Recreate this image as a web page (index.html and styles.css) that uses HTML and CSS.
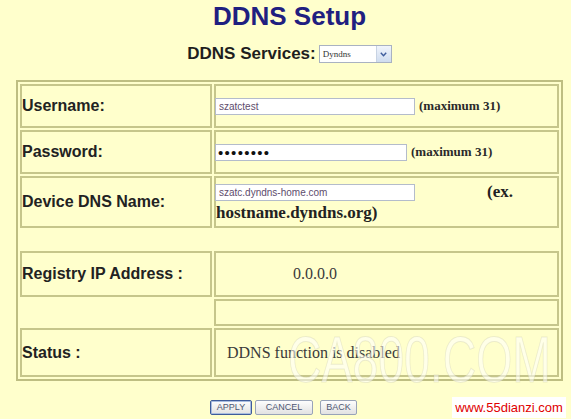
FILE: index.html
```html
<!DOCTYPE html>
<html>
<head>
<meta charset="utf-8">
<title>DDNS Setup</title>
<link rel="stylesheet" href="styles.css">
</head>
<body>
<div class="page">
  <h1 class="title">DDNS Setup</h1>
  <div class="services">
    <span class="services-label">DDNS Services:</span>
    <div class="select">
      <span class="select-text">Dyndns</span>
      <span class="select-arrow"><svg width="7" height="5" viewBox="0 0 7 5"><path d="M0.8 0.8 L3.5 3.8 L6.2 0.8" fill="none" stroke="#3f5d9c" stroke-width="1.4"/></svg></span>
    </div>
  </div>
  <table class="ddns">
    <tr>
      <td class="label h1">Username:</td>
      <td class="value h1"><div class="inline"><input class="field w200" type="text" value="szatctest"><span class="hint">(maximum 31)</span></div></td>
    </tr>
    <tr>
      <td class="label h2">Password:</td>
      <td class="value h2"><div class="inline"><input class="field pwd w192" type="password" value="12345678"><span class="hint">(maximum 31)</span></div></td>
    </tr>
    <tr>
      <td class="label h3">Device DNS Name:</td>
      <td class="value h3">
        <div class="line1"><input class="field w200" type="text" value="szatc.dyndns-home.com"><span class="ex">(ex.</span></div>
        <div class="line2">hostname.dyndns.org)</div>
      </td>
    </tr>
    <tr>
      <td class="blank hgap" colspan="2"></td>
    </tr>
    <tr>
      <td class="label h4">Registry IP Address :</td>
      <td class="value h4"><span class="plain ip">0.0.0.0</span></td>
    </tr>
    <tr>
      <td class="blank h5"></td>
      <td class="value h5"></td>
    </tr>
    <tr>
      <td class="label h6">Status :</td>
      <td class="value h6"><span class="plain status">DDNS function is disabled</span></td>
    </tr>
  </table>
  <div class="buttons">
    <button class="btn btn-default b-apply" type="button">APPLY</button>
    <button class="btn b-cancel" type="button">CANCEL</button>
    <button class="btn b-back" type="button">BACK</button>
  </div>
</div>
<div class="ghost">CA800.COM</div>
<div class="site">www.55dianzi.com</div>
</body>
</html>
```
FILE: styles.css
```css
html, body {
  margin: 0;
  background: #ffffcc;
}
body {
  font-family: "Liberation Sans", Arial, sans-serif;
  width: 571px;
  height: 419px;
  overflow: hidden;
}
.page {
  width: 547px;
  margin-left: 16px;
}
.title {
  margin: 0;
  padding-top: 1px;
  height: 30px;
  line-height: 30px;
  font-size: 26px;
  font-weight: bold;
  color: #1f2080;
  text-align: center;
}
.services {
  display: flex;
  justify-content: center;
  align-items: center;
  height: 20px;
  margin-top: 13px;
}
.services-label {
  font-size: 17px;
  font-weight: bold;
  color: #1e1e1e;
  margin-right: 3px;
}
.select {
  width: 73px;
  height: 18px;
  box-sizing: border-box;
  border: 1px solid #a9b2c2;
  background: #fff;
  display: flex;
  align-items: stretch;
}
.select-text {
  flex: 1;
  font-family: "Liberation Serif", serif;
  font-size: 9px;
  line-height: 16px;
  padding-left: 3px;
  color: #333;
}
.select-arrow {
  width: 14px;
  background: linear-gradient(#f1f5fc, #cfdcef);
  border-left: 1px solid #c8d3e3;
  display: flex;
  align-items: center;
  justify-content: center;
}
.ddns {
  margin-top: 16px;
  width: 547px;
  border: 2px solid #bebe82;
  border-spacing: 2px;
  border-collapse: separate;
}
.ddns td {
  border: 2px solid #c6c68b;
  padding: 0;
  box-sizing: border-box;
  vertical-align: middle;
}
.ddns td.blank {
  border: none;
}
.label {
  width: 192px;
  padding-left: 1px;
  font-size: 16px;
  font-weight: bold;
  color: #222;
}
.h1 { height: 44px; }
.h2 { height: 44px; }
.h3 { height: 52px; }
.hgap { height: 19px; }
.h4 { height: 46px; }
.h5 { height: 27px; }
.h6 { height: 49px; }
.inline {
  display: flex;
  align-items: center;
}
.field {
  box-sizing: border-box;
  height: 17px;
  margin: 0 0 0 -1px;
  border: 1px solid #b4bccb;
  background: #fff;
  padding: 0 3px;
  font-family: "Liberation Sans", Arial, sans-serif;
  font-size: 10px;
  color: #5e4c6c;
  outline: none;
}
.w200 { width: 200px; }
.w192 { width: 192px; }
.pwd {
  font-size: 15px;
  color: #111;
  letter-spacing: 1.3px;
  padding-left: 2px;
}
.hint {
  margin-left: 4px;
  font-family: "Liberation Serif", serif;
  font-weight: bold;
  font-size: 13px;
  color: #2a2a2a;
}
.line1 {
  display: flex;
  align-items: center;
  height: 22px;
}
.ex {
  margin-left: 72px;
  font-family: "Liberation Serif", serif;
  font-weight: bold;
  font-size: 17px;
  line-height: 20px;
  color: #222;
}
.line2 {
  font-family: "Liberation Serif", serif;
  font-weight: bold;
  font-size: 17px;
  line-height: 20px;
  color: #222;
}
.plain {
  font-family: "Liberation Serif", serif;
  font-size: 16px;
  color: #3a3a3a;
}
.ip { padding-left: 77px; }
.status { padding-left: 11px; }
.buttons {
  display: flex;
  justify-content: center;
  margin-top: 19px;
  padding-right: 12px;
}
.btn {
  box-sizing: border-box;
  height: 15px;
  padding: 0;
  margin: 0;
  border: 1px solid #98a3b8;
  border-radius: 2px;
  background: linear-gradient(#fdfdfd, #e2e2e2);
  font-family: "Liberation Sans", Arial, sans-serif;
  font-size: 9px;
  line-height: 13px;
  color: #4d5772;
}
.btn-default {
  border-color: #3f5c9a;
  box-shadow: inset 0 0 0 1px #a9bde0;
}
.b-apply { width: 42px; }
.b-cancel { width: 58px; margin-left: 3px; }
.b-back { width: 37px; margin-left: 7px; }
.ghost {
  position: absolute;
  left: 288px;
  top: 328px;
  font-family: "Liberation Sans", Arial, sans-serif;
  font-size: 64px;
  line-height: 1;
  white-space: nowrap;
  transform: scaleX(0.725);
  transform-origin: left top;
  color: rgba(255, 255, 255, 0.55);
  -webkit-text-stroke: 1px rgba(185, 185, 160, 0.28);
  pointer-events: none;
}
.site {
  position: absolute;
  left: 452px;
  top: 397px;
  width: 114px;
  height: 21px;
  background: #fff;
  color: #e00000;
  font-family: "Liberation Sans", Arial, sans-serif;
  font-size: 13px;
  line-height: 21px;
  text-align: center;
}
```
